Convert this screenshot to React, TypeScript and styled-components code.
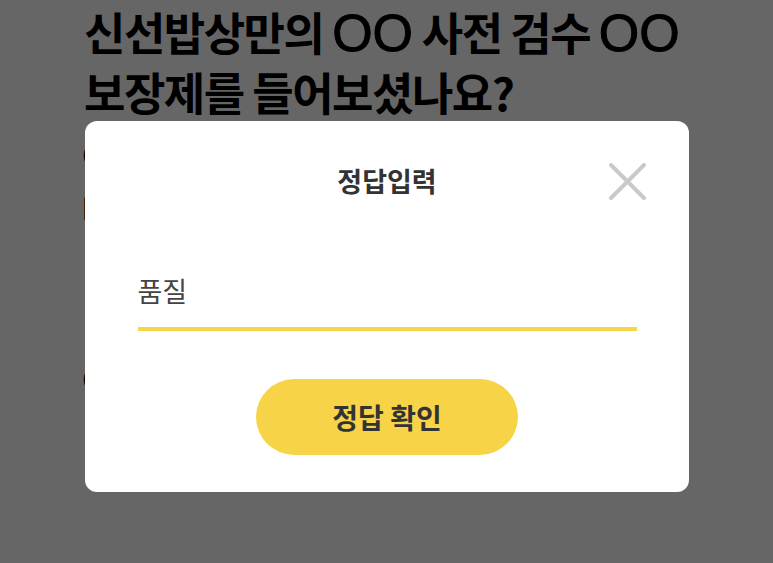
import { useState } from "react";
import styled, { createGlobalStyle } from "styled-components";

const GlobalStyle = createGlobalStyle`
  html, body {
    margin: 0;
    padding: 0;
    background: #ffffff;
    font-family: "Noto Sans CJK KR", "Noto Sans", sans-serif;
  }
  * {
    box-sizing: border-box;
  }
`

const Page = styled.div`
  width: 773px;
  height: 563px;
  overflow: hidden;
  padding: 2px 84px 0;
`

const Question = styled.h1`
  margin: 0;
  font-size: 45px;
  line-height: 60px;
  font-weight: 700;
  letter-spacing: -1.5px;
  color: #000;
  white-space: nowrap;
`

// the OO blanks are drawn wider and rounder than the hangul around them
const Blank = styled.span`
  font-family: "Liberation Sans", Arial, sans-serif;
  font-size: 52px;
  line-height: 0;
  font-weight: 400;
  letter-spacing: 0;
  -webkit-text-stroke: 1px #000;
`

const Body = styled.div`
  margin-top: 4px;
  margin-left: -2px;
  font-size: 34px;
  line-height: 56px;
  font-weight: 700;
  color: #000;
  white-space: nowrap;
`

const Overlay = styled.div`
  position: fixed;
  inset: 0;
  background: rgba(0, 0, 0, 0.6);
  display: flex;
  justify-content: center;
  align-items: flex-start;
  padding-top: 121px;
`

const Modal = styled.div`
  position: relative;
  width: 604px;
  background: #ffffff;
  border-radius: 12px;
  padding: 40px 52px 37px 53px;
  display: flex;
  flex-direction: column;
  align-items: center;
`

const Title = styled.h2`
  margin: 0;
  font-size: 27px;
  line-height: 40px;
  font-weight: 700;
  color: #333;
`

const CloseButton = styled.button`
  position: absolute;
  top: 42px;
  right: 43px;
  width: 37px;
  height: 37px;
  padding: 0;
  border: none;
  background: none;
  cursor: pointer;
  display: flex;
`

const AnswerInput = styled.input`
  margin-top: 68px;
  width: 100%;
  height: 62px;
  padding: 0 0 16px;
  border: none;
  border-bottom: 4px solid #f5d54c;
  outline: none;
  font-family: inherit;
  font-size: 27px;
  color: #444;
  background: transparent;
`

const SubmitButton = styled.button`
  margin-top: 48px;
  width: 262px;
  height: 76px;
  border: none;
  border-radius: 38px;
  background: #f7d447;
  font-family: inherit;
  font-size: 28px;
  font-weight: 700;
  color: #333;
  cursor: pointer;
`

const App = () => {
  const [answer, setAnswer] = useState('품질');

  const handleAnswer = (e: React.ChangeEvent<HTMLInputElement>) => {
    setAnswer(() => e.target.value);
  }

  return (
    <>
      <GlobalStyle />
      <Page>
        <Question>
          신선밥상만의 <Blank>OO</Blank> 사전 검수 <Blank>OO</Blank><br />
          보장제를 들어보셨나요?
        </Question>
        <Body>
          OO 안에 들어갈 단어는<br />
          바로 우리가 매일 먹는<br />
          · 식재료의 기본이죠<br />
          <br />
          OO을 입력해 주세요
        </Body>
      </Page>
      <Overlay>
        <Modal>
          <Title>정답입력</Title>
          <CloseButton aria-label="닫기">
            <svg width="37" height="37" viewBox="0 0 37 37">
              <path d="M2 2 L35 35 M35 2 L2 35" stroke="#c9c9c9" strokeWidth="4" strokeLinecap="round" />
            </svg>
          </CloseButton>
          <AnswerInput type="text" value={answer} onChange={handleAnswer} />
          <SubmitButton>정답 확인</SubmitButton>
        </Modal>
      </Overlay>
    </>
  )
}

export default App;
